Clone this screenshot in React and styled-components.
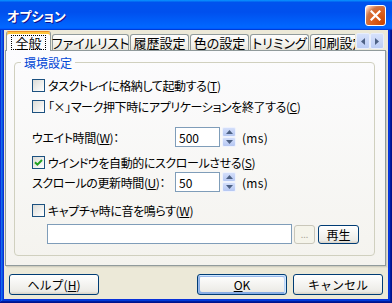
import React from "react";
import styled, { createGlobalStyle, css } from "styled-components";

const FONT = `"Noto Sans CJK JP", "Noto Sans", sans-serif`;

const Global = createGlobalStyle`
  html, body { margin: 0; padding: 0; background: #fff; overflow: hidden; }
  #root { width: 392px; height: 303px; }
  *, *::before, *::after { box-sizing: border-box; }
`;

const Window = styled.div`
  width: 392px;
  height: 303px;
  display: flex;
  flex-direction: column;
  background: #0831d9;
  box-shadow: inset -1px -1px #00138c, inset 1px 1px #0831d9,
    inset -2px -2px #001ea0, inset 2px 2px #166aee,
    inset -3px -3px #003bda, inset 3px 3px #0855dd;
  font-family: ${FONT};
  font-size: 12px;
  color: #000;
  font-feature-settings: "palt";
`;

const TitleBar = styled.div`
  height: 30px;
  flex: none;
  display: flex;
  align-items: center;
  justify-content: space-between;
  padding: 0 6px 0 7px;
  background: linear-gradient(180deg, #0997ff, #0053ee 8%, #0050ee 40%, #0066ff 88%, #0066ff 93%, #005bff 95%, #003dd7 96%, #003dd7);
`;

const TitleText = styled.span`
  color: #fff;
  font-weight: bold;
  font-size: 13px;
  text-shadow: 1px 1px #0f1089;
`;

const CloseButton = styled.div`
  width: 21px;
  height: 21px;
  border: 1px solid #fff;
  border-radius: 3px;
  background: radial-gradient(circle at 90% 90%, #cc4600 0%, #dc6527 55%, #cd7546 70%, #ffccb2 90%, #fff 100%);
  display: flex;
  align-items: center;
  justify-content: center;
`;

const Body = styled.div`
  flex: 1;
  margin: 0 4px 4px;
  background: #ece9d8;
  display: flex;
  flex-direction: column;
  padding: 1px 2px 4px 1px;
`;

const TabRow = styled.div`
  display: flex;
  align-items: flex-end;
  height: 20px;
  padding-left: 1px;
  position: relative;
  z-index: 1;
`;

const TabStrip = styled.div`
  flex: 1;
  min-width: 0;
  height: 100%;
  display: flex;
  align-items: flex-end;
  gap: 1px;
  overflow: hidden;
`;

const Tab = styled.div`
  flex: none;
  width: ${(p) => p.$w}px;
  height: 16px;
  margin-bottom: 1px;
  border: 1px solid #919b9c;
  border-bottom: none;
  border-radius: 3px 3px 0 0;
  background: linear-gradient(180deg, #fefefe, #f3f2ec 60%, #e6e4da);
  display: flex;
  align-items: center;
  justify-content: center;
  font-size: 13px;
  white-space: nowrap;
  ${(p) =>
    p.$active &&
    css`
      height: 20px;
      margin-bottom: 0;
      border-top-color: #e68b2c;
      box-shadow: inset 0 2px #ffc73c;
      background: #fcfcfe;
      padding-top: 2px;
    `}
`;

const FocusLabel = styled.span`
  border: 1px dotted #000;
  padding: 0 3px;
  line-height: 13px;
`;

const TabScroll = styled.div`
  flex: none;
  display: flex;
  margin: 0 2px 2px 1px;
`;

const ScrollBtn = styled.div`
  width: 14px;
  height: 16px;
  border: 1px solid #e8eefc;
  border-radius: 2px;
  background: linear-gradient(180deg, #d6e1fb, #bccdf4);
  display: flex;
  align-items: center;
  justify-content: center;
`;

const Panel = styled.div`
  height: 216px;
  flex: none;
  margin-top: -1px;
  border: 1px solid #919b9c;
  background: linear-gradient(180deg, #fcfcfe, #f4f3ee);
  box-shadow: 1px 1px #d0cebf, 2px 2px #e3e0d0;
  display: flex;
  flex-direction: column;
  padding: 5px 10px 9px 8px;
`;

const Group = styled.fieldset`
  flex: 1;
  margin: 0;
  padding: 0 6px;
  min-width: 0;
  border: 1px solid #d0d0bf;
  border-radius: 4px;
`;

const Legend = styled.legend`
  color: #0046d5;
  padding: 0 3px;
  line-height: 13px;
  font-size: 12px;
`;

const GroupBody = styled.div`
  display: flex;
  flex-direction: column;
  padding-left: 11px;
  letter-spacing: -0.4px;
`;

const Row = styled.div`
  display: flex;
  align-items: center;
  height: ${(p) => p.$h}px;
  margin-top: ${(p) => p.$mt}px;
  white-space: nowrap;
`;

const Box = styled.span`
  width: 13px;
  height: 13px;
  flex: none;
  border: 1px solid #1c5180;
  background: linear-gradient(135deg, #dcdcd7, #fff);
  display: flex;
  align-items: center;
  justify-content: center;
  margin-right: 3px;
`;

const Key = styled.span`
  text-decoration: underline;
`;

const FieldLabel = styled.span`
  width: 143px;
  flex: none;
`;

const Field = styled.input`
  width: ${(p) => p.$w}px;
  height: 20px;
  flex: none;
  margin: 0 0 0 ${(p) => p.$ml || 0}px;
  border: 1px solid #7f9db9;
  background: #fff;
  padding: 0 3px;
  font: inherit;
  font-size: 12px;
  letter-spacing: 0;
  color: #000;
  outline: none;
`;

const Spin = styled.div`
  width: 14px;
  height: 20px;
  flex: none;
  margin-left: 2px;
  display: flex;
  flex-direction: column;
`;

const SpinBtn = styled.div`
  flex: 1;
  border: 1px solid #eef2fd;
  border-radius: 2px;
  background: linear-gradient(180deg, #d3defa, #b5c7f2);
  display: flex;
  align-items: center;
  justify-content: center;
`;

const Unit = styled.span`
  margin-left: 6px;
  letter-spacing: 0.3px;
`;

const Btn = styled.button`
  width: ${(p) => p.$w}px;
  height: ${(p) => p.$h}px;
  flex: none;
  margin-left: ${(p) => p.$ml || 0}px;
  border: 1px solid #003c74;
  border-radius: 3px;
  background: linear-gradient(180deg, #fff, #ecebe6 86%, #d6d0c5);
  font-family: ${FONT};
  font-size: 12px;
  color: #000;
  padding: 0;
  display: flex;
  align-items: center;
  justify-content: center;
  ${(p) =>
    p.$default &&
    css`
      box-shadow: inset -1px 1px #cee7ff, inset 1px 2px #98b8ea,
        inset -2px 2px #bcd4f6, inset 1px -1px #89ade4, inset 2px -2px #89ade4;
    `}
  ${(p) =>
    p.disabled &&
    css`
      border-color: #c9c7ba;
      background: #f5f4ea;
      color: #aca899;
      align-items: flex-end;
      font-size: 9px;
      padding-bottom: 2px;
    `}
`;

const Footer = styled.div`
  display: flex;
  height: 21px;
  margin-top: 8px;
  padding: 0 3px 0 4px;
`;

const Spacer = styled.div`
  flex: 1;
`;

const Tri = ({ dir }) => {
  const pts = {
    up: "0,4 3.5,0 7,4",
    down: "0,0 3.5,4 7,0",
    left: "4,0 0,3.5 4,7",
    right: "0,0 4,3.5 0,7",
  }[dir];
  const vertical = dir === "up" || dir === "down";
  return (
    <svg width={vertical ? 7 : 4} height={vertical ? 4 : 7} viewBox={vertical ? "0 0 7 4" : "0 0 4 7"}>
      <polygon points={pts} fill="#4d6185" />
    </svg>
  );
};

const Check = ({ checked, children, mt }) => (
  <Row $h={17} $mt={mt}>
    <Box>
      {checked && (
        <svg width="9" height="9" viewBox="0 0 9 9">
          <path d="M1 4.2 L3.4 6.6 L8 2" fill="none" stroke="#21a121" strokeWidth="2" />
        </svg>
      )}
    </Box>
    <span>{children}</span>
  </Row>
);

const SpinBox = () => (
  <Spin>
    <SpinBtn>
      <Tri dir="up" />
    </SpinBtn>
    <SpinBtn>
      <Tri dir="down" />
    </SpinBtn>
  </Spin>
);

const tabs = [
  { label: "ファイルリスト", w: 77 },
  { label: "履歴設定", w: 59 },
  { label: "色の設定", w: 59 },
  { label: "トリミング", w: 59 },
  { label: "印刷設定", w: 59 },
];

export default function App() {
  return (
    <>
      <Global />
      <Window>
        <TitleBar>
          <TitleText>オプション</TitleText>
          <CloseButton>
            <svg width="11" height="11" viewBox="0 0 11 11">
              <path d="M1.5 1.5 L9.5 9.5 M9.5 1.5 L1.5 9.5" stroke="#fff" strokeWidth="2.2" strokeLinecap="square" />
            </svg>
          </CloseButton>
        </TitleBar>
        <Body>
          <TabRow>
            <TabStrip>
              <Tab $w={45} $active>
                <FocusLabel>全般</FocusLabel>
              </Tab>
              {tabs.map((t) => (
                <Tab key={t.label} $w={t.w}>
                  {t.label}
                </Tab>
              ))}
            </TabStrip>
            <TabScroll>
              <ScrollBtn>
                <Tri dir="left" />
              </ScrollBtn>
              <ScrollBtn>
                <Tri dir="right" />
              </ScrollBtn>
            </TabScroll>
          </TabRow>
          <Panel>
            <Group>
              <Legend>環境設定</Legend>
              <GroupBody>
                <Check mt={8}>
                  タスクトレイに格納して起動する(<Key>T</Key>)
                </Check>
                <Check mt={4}>
                  「×」マーク押下時にアプリケーションを終了する(<Key>C</Key>)
                </Check>
                <Row $h={20} $mt={12}>
                  <FieldLabel>
                    ウエイト時間(<Key>W</Key>)：
                  </FieldLabel>
                  <Field $w={45} defaultValue="500" readOnly />
                  <SpinBox />
                  <Unit>(ms)</Unit>
                </Row>
                <Check mt={7} checked>
                  ウインドウを自動的にスクロールさせる(<Key>S</Key>)
                </Check>
                <Row $h={20} $mt={1}>
                  <FieldLabel>
                    スクロールの更新時間(<Key>U</Key>)：
                  </FieldLabel>
                  <Field $w={45} defaultValue="50" readOnly />
                  <SpinBox />
                  <Unit>(ms)</Unit>
                </Row>
                <Check mt={10}>
                  キャプチャ時に音を鳴らす(<Key>W</Key>)
                </Check>
                <Row $h={20} $mt={5}>
                  <Field $w={245} $ml={15} defaultValue="" readOnly />
                  <Btn $w={21} $h={19} $ml={2} disabled>
                    ...
                  </Btn>
                  <Btn $w={41} $h={19} $ml={3}>
                    再生
                  </Btn>
                </Row>
              </GroupBody>
            </Group>
          </Panel>
          <Footer>
            <Btn $w={90} $h={21}>
              ヘルプ(<Key>H</Key>)
            </Btn>
            <Spacer />
            <Btn $w={90} $h={21} $default>
              <Key>O</Key>K
            </Btn>
            <Btn $w={90} $h={21} $ml={6}>
              キャンセル
            </Btn>
          </Footer>
        </Body>
      </Window>
    </>
  );
}
